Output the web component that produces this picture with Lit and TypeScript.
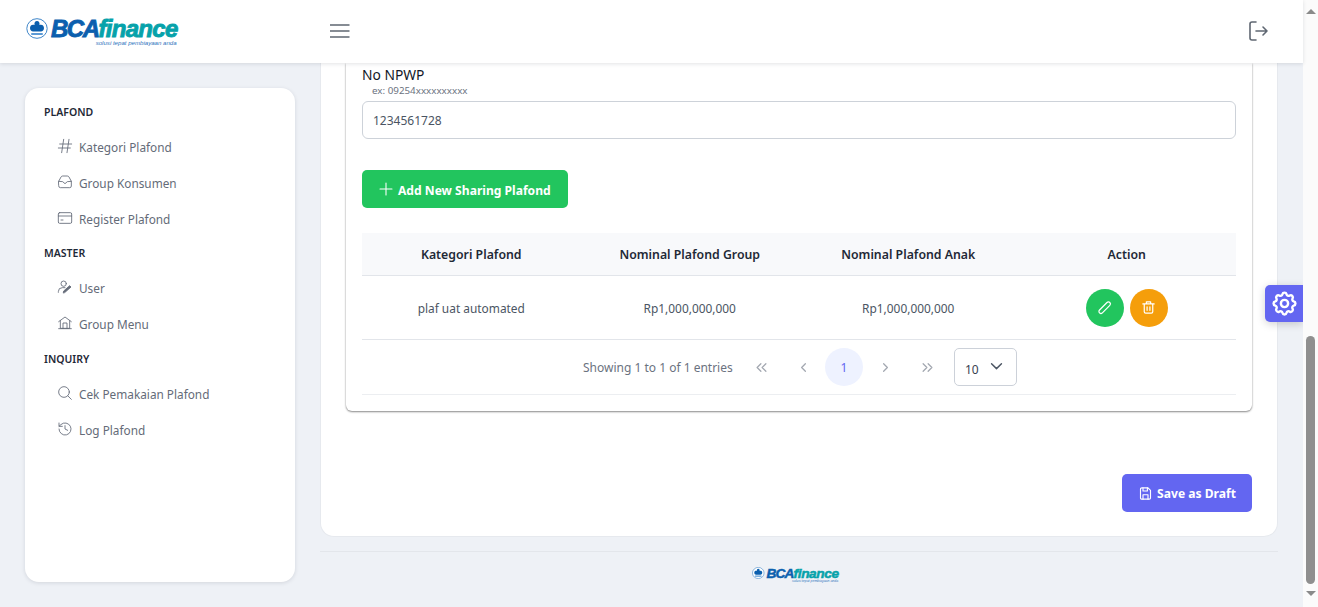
import { LitElement, css, html, svg } from "lit";
import { customElement } from "lit/decorators.js";

const icon = (body: unknown, size = 16, sw = 1.5) => html`<svg
  width=${size}
  height=${size}
  viewBox="0 0 24 24"
  fill="none"
  stroke="currentColor"
  stroke-width=${sw}
  stroke-linecap="round"
  stroke-linejoin="round"
>
  ${body}
</svg>`;

const icons = {
  hash: svg`<path d="M4 9h18M2 15h18M10 2 7 22M18 2l-3 20" />`,
  inbox: svg`<path d="M2.500 11 6 4.500A3 3 0 0 1 8.500 3h7A3 3 0 0 1 18 4.500L21.500 11v7a2.500 2.500 0 0 1-2.500 2.500H5A2.500 2.500 0 0 1 2.500 18z" /><path d="M2.500 11l6 .5 3.500 3 3.500-3 6-.5" />`,
  card: svg`<rect x="2" y="4" width="20" height="16" rx="2" /><path d="M2 9h20M6 15h3" />`,
  user: svg`<circle cx="10" cy="7" r="4" /><path d="M2 20v-1a6 6 0 0 1 6-6h4" /><path d="m12 20 9-8-2-2-9 8-.5 2.500z" fill="currentColor" />`,
  home: svg`<path d="M2.500 10 12 3l9.500 7" /><path d="M5 8.500V20h14V8.500" /><path d="M2.500 20.500h19M9 20v-8h6v8" />`,
  search: svg`<circle cx="10.500" cy="10.500" r="8" /><path d="m21.500 21.500-5.200-5.200" />`,
  history: svg`<path d="M3 12a9 9 0 1 0 3-6.700L3 8" /><path d="M3 3v5h5M12 7v5l4 2" />`,
  plus: svg`<path d="M12 3v18M3 12h18" />`,
  pencil: svg`<path d="M5 15.500 15.500 5a2.800 2.800 0 0 1 4 4L9 19.500a2.800 2.800 0 0 1-4-4z" />`,
  trash: svg`<path d="M4 7h16M9 7V4h6v3M6 7v11a2 2 0 0 0 2 2h8a2 2 0 0 0 2-2V7M10 11v5M14 11v5" />`,
  save: svg`<path d="M6 3h10l4 4v12a2 2 0 0 1-2 2H6a2 2 0 0 1-2-2V5a2 2 0 0 1 2-2z" /><path d="M8 3v5h7V3M8 21v-7h8v7" />`,
  logout: svg`<path d="M10 3H6a2 2 0 0 0-2 2v14a2 2 0 0 0 2 2h4" /><path d="M10 12h11M17 8l4 4-4 4" />`,
  gear: svg`<path d="M10.300 4.300c.4-1.700 3-1.700 3.400 0a1.700 1.700 0 0 0 2.600 1.100c1.500-.9 3.300.8 2.400 2.400a1.700 1.700 0 0 0 1 2.500c1.800.4 1.800 3 0 3.400a1.700 1.700 0 0 0-1 2.600c.9 1.500-.9 3.300-2.400 2.400a1.700 1.700 0 0 0-2.600 1c-.4 1.800-3 1.800-3.400 0a1.700 1.700 0 0 0-2.600-1c-1.500.9-3.300-.9-2.400-2.400a1.700 1.700 0 0 0-1-2.600c-1.800-.4-1.800-3 0-3.400a1.700 1.700 0 0 0 1-2.500c-.9-1.600.9-3.300 2.400-2.400 1 .6 2.300.1 2.600-1.100z" /><circle cx="12" cy="12" r="3" />`,
  first: svg`<path d="m11 6-6 6 6 6M19 6l-6 6 6 6" />`,
  prev: svg`<path d="m15 6-6 6 6 6" />`,
  next: svg`<path d="m9 6 6 6-6 6" />`,
  last: svg`<path d="m5 6 6 6-6 6M13 6l6 6-6 6" />`,
  chevron: svg`<path d="m5 8 7 7 7-7" />`,
};

const menu = [
  {
    title: "PLAFOND",
    items: [
      ["Kategori Plafond", icons.hash],
      ["Group Konsumen", icons.inbox],
      ["Register Plafond", icons.card],
    ],
  },
  {
    title: "MASTER",
    items: [
      ["User", icons.user],
      ["Group Menu", icons.home],
    ],
  },
  {
    title: "INQUIRY",
    items: [
      ["Cek Pemakaian Plafond", icons.search],
      ["Log Plafond", icons.history],
    ],
  },
];

@customElement("brand-logo")
class BrandLogo extends LitElement {
  static styles = css`
    :host {
      display: inline-flex;
      gap: 3px;
      align-items: flex-start;
      font-family: "Liberation Sans", sans-serif;
    }

    .text {
      display: flex;
      flex-direction: column;
      margin-top: 1px;
    }

    .name {
      font-size: 24px;
      line-height: 20px;
      font-weight: 700;
      font-style: italic;
      letter-spacing: -1.500px;
      white-space: nowrap;
      -webkit-text-stroke: 0.9px currentColor;
    }

    .bca {
      color: #0b5fae;
    }

    .finance {
      color: #06a2aa;
      letter-spacing: -0.700px;
    }

    .tag {
      font-size: 6.100px;
      line-height: 7px;
      font-style: italic;
      color: #2f74bd;
      text-align: right;
      padding-right: 1px;
      white-space: nowrap;
    }
  `;

  render() {
    return html`
      <svg width="22" height="21" viewBox="0 0 22 21">
        <ellipse cx="11" cy="10.500" rx="10.200" ry="9.800" fill="#fff" stroke="#3f86c9" stroke-width="1" />
        <path
          d="M11 3c2 0 3 2 2.400 4 2-1 4.600 0 4.600 3 0 2-1.500 3.500-3 3.500H7c-1.500 0-3-1.500-3-3.500 0-3 2.600-4 4.600-3C8 5 9 3 11 3z"
          fill="#0b5fae"
        />
        <rect x="5" y="15" width="12" height="2" rx="1" fill="#5b9ad6" />
      </svg>
      <div class="text">
        <div class="name"><span class="bca">BCA</span><span class="finance">finance</span></div>
        <div class="tag">solusi tepat pembiayaan anda</div>
      </div>
    `;
  }
}

@customElement("side-menu")
class SideMenu extends LitElement {
  static styles = css`
    :host {
      display: block;
      width: 270px;
      height: 494px;
      box-sizing: border-box;
      padding: 15px 0 0 19px;
      background: #fff;
      border-radius: 14px;
      box-shadow: 0 1px 4px rgb(15 23 42 / 12%);
    }

    .title {
      height: 18px;
      line-height: 18px;
      font-size: 10.500px;
      font-weight: 600;
      color: #1f2937;
      margin-bottom: 8px;
    }

    .group + .group .title {
      margin-top: 7px;
    }

    .group:last-child .title {
      margin-top: 8px;
    }

    .item {
      display: flex;
      align-items: center;
      gap: 6px;
      height: 36px;
      padding-left: 13px;
      font-size: 11.800px;
      color: #646b78;
    }

    .item svg {
      margin-top: -3px;
      flex: none;
    }
  `;

  render() {
    return menu.map(
      (group) => html`
        <div class="group">
          <div class="title">${group.title}</div>
          ${group.items.map(
            ([label, glyph]) => html`<div class="item">${icon(glyph, 16, 1.3)}<span>${label}</span></div>`,
          )}
        </div>
      `,
    );
  }
}

@customElement("plafond-table")
class PlafondTable extends LitElement {
  static styles = css`
    :host {
      display: block;
      font-size: 12px;
    }

    .row {
      display: grid;
      grid-template-columns: repeat(4, 1fr);
      align-items: center;
      text-align: center;
      color: #4b5563;
      border-bottom: 1px solid #e2e5ea;
    }

    .head {
      height: 41px;
      padding-top: 1px;
      background: #f8f9fb;
      font-size: 12.300px;
      font-weight: 600;
      color: #1f2937;
    }

    .body {
      height: 63px;
      font-size: 11.900px;
    }

    .cell {
      padding-top: 1px;
    }

    .actions {
      display: flex;
      justify-content: center;
      gap: 6px;
    }

    .round {
      width: 38px;
      height: 38px;
      border-radius: 50%;
      display: grid;
      place-items: center;
      color: #fff;
    }

    .green {
      background: #22c55e;
    }

    .orange {
      background: #f59e0b;
    }

    .pager {
      height: 54px;
      display: flex;
      align-items: center;
      border-bottom: 1px solid #eceef1;
      padding-left: 221px;
      color: #6b7280;
    }

    .count {
      width: 150px;
      white-space: nowrap;
    }

    .page-btn {
      width: 42px;
      display: grid;
      place-items: center;
      color: #a3a8b1;
    }

    .page-btn.first {
      margin-left: 7px;
    }

    .current {
      width: 38px;
      height: 38px;
      border-radius: 50%;
      background: #eef2ff;
      color: #6366f1;
      display: grid;
      place-items: center;
      margin: 0 1px;
    }

    .size {
      width: 63px;
      height: 38px;
      box-sizing: border-box;
      margin-left: 6px;
      border: 1px solid #ccd1d9;
      border-radius: 5px;
      display: flex;
      align-items: center;
      justify-content: space-between;
      padding: 0 11px 0 10px;
      color: #374151;
    }

    .size span {
      margin-top: 4px;
    }

    .size svg {
      color: #4b5563;
      margin-top: -1px;
    }
  `;

  render() {
    return html`
      <div class="row head">
        <div>Kategori Plafond</div>
        <div>Nominal Plafond Group</div>
        <div>Nominal Plafond Anak</div>
        <div>Action</div>
      </div>
      <div class="row body">
        <div class="cell">plaf uat automated</div>
        <div class="cell">Rp1,000,000,000</div>
        <div class="cell">Rp1,000,000,000</div>
        <div class="actions">
          <div class="round green">${icon(icons.pencil, 17, 1.7)}</div>
          <div class="round orange">${icon(icons.trash, 17, 1.7)}</div>
        </div>
      </div>
      <div class="pager">
        <div class="count">Showing 1 to 1 of 1 entries</div>
        <div class="page-btn first">${icon(icons.first, 15, 2)}</div>
        <div class="page-btn">${icon(icons.prev, 15, 2)}</div>
        <div class="current">1</div>
        <div class="page-btn">${icon(icons.next, 15, 2)}</div>
        <div class="page-btn">${icon(icons.last, 15, 2)}</div>
        <div class="size"><span>10</span>${icon(icons.chevron, 17, 2)}</div>
      </div>
    `;
  }
}

@customElement("app-root")
export class AppRoot extends LitElement {
  static styles = css`
    :host {
      display: flex;
      height: 607px;
      overflow: hidden;
      font-family: "Noto Sans", sans-serif;
      position: relative;
      background: #eef1f6;
    }

    .page {
      flex: 1;
      min-width: 0;
      display: flex;
      flex-direction: column;
    }

    header {
      height: 63px;
      box-sizing: border-box;
      flex: none;
      background: #fff;
      box-shadow: 0 1px 4px rgb(15 23 42 / 12%);
      display: flex;
      align-items: center;
      padding: 0 33px 2px 26px;
      position: relative;
      z-index: 1;
    }

    header brand-logo {
      margin-top: 2px;
    }

    .burger {
      margin-left: 152px;
      color: #5f6772;
      display: flex;
    }

    .logout {
      margin-left: auto;
      color: #5f6772;
      display: flex;
    }

    .content {
      flex: 1;
      display: flex;
      padding-left: 25px;
      min-height: 0;
    }

    .left {
      padding-top: 25px;
    }

    .right {
      margin-left: 25px;
      width: 958px;
      display: flex;
      flex-direction: column;
    }

    .panel {
      height: 474px;
      box-sizing: border-box;
      background: #fff;
      border: 1px solid #e6e9ee;
      border-top: none;
      border-radius: 0 0 14px 14px;
      padding: 0 25px;
    }

    .inner {
      height: 348px;
      box-sizing: border-box;
      padding: 0 16px;
      border-radius: 0 0 6px 6px;
      box-shadow: 0 1px 2px rgb(0 0 0 / 45%), 0 0 2px rgb(0 0 0 / 10%);
    }

    label {
      display: block;
      padding-top: 3px;
      height: 18px;
      font-size: 13.800px;
      line-height: 18px;
      color: #111827;
    }

    .hint {
      height: 17px;
      padding-left: 10px;
      font-size: 9.800px;
      line-height: 13px;
      color: #6b7280;
    }

    .input {
      height: 38px;
      box-sizing: border-box;
      border: 1px solid #cdd2d9;
      border-radius: 6px;
      padding: 0 10px;
      display: flex;
      align-items: center;
      font-size: 12px;
      color: #4b5563;
    }

    .btn {
      height: 38px;
      box-sizing: border-box;
      border-radius: 5px;
      display: inline-flex;
      align-items: center;
      color: #fff;
      font-size: 12.100px;
      font-weight: 700;
    }

    .btn span {
      padding-top: 1px;
    }

    .add {
      margin: 31px 0 25px;
      width: 206px;
      padding-left: 16px;
      gap: 4px;
      background: #22c55e;
    }

    .add span {
      padding-top: 2px;
    }

    .draft-row {
      display: flex;
      justify-content: flex-end;
      margin-top: 63px;
    }

    .draft {
      width: 130px;
      gap: 4px;
      justify-content: center;
      background: #6366f1;
    }

    footer {
      margin-top: 14px;
      border-top: 1px solid #e3e6eb;
      display: flex;
      justify-content: center;
      padding: 15px 7px 0 0;
    }

    .mini {
      zoom: 0.57;
    }

    .gear {
      position: absolute;
      left: 1265px;
      top: 285px;
      width: 38px;
      height: 37px;
      border-radius: 5px 0 0 5px;
      background: #6366f1;
      color: #fff;
      display: grid;
      place-items: center;
      box-shadow: 0 2px 8px rgb(0 0 0 / 18%);
    }

    .scrollbar {
      width: 15px;
      flex: none;
      background: #fbfbfb;
      display: flex;
      flex-direction: column;
      align-items: center;
      position: relative;
    }

    .arrow {
      width: 0;
      height: 0;
      border-left: 5px solid transparent;
      border-right: 5px solid transparent;
    }

    .arrow.up {
      margin-top: 9px;
      border-bottom: 5px solid #8a8a8a;
    }

    .arrow.down {
      margin-top: 7px;
      border-top: 5px solid #8a8a8a;
    }

    .thumb {
      margin-top: 322px;
      width: 9px;
      height: 248px;
      border-radius: 5px;
      background: #8f8f8f;
    }
  `;

  render() {
    return html`
      <div class="page">
        <header>
          <brand-logo></brand-logo>
          <span class="burger">
            <svg width="20" height="14" viewBox="0 0 20 14" fill="none" stroke="currentColor" stroke-width="1.6">
              <path d="M0 1h19.500M0 7h19.500M0 13h19.500" />
            </svg>
          </span>
          <span class="logout">${icon(icons.logout, 24, 1.6)}</span>
        </header>
        <div class="content">
          <div class="left"><side-menu></side-menu></div>
          <div class="right">
            <div class="panel">
              <div class="inner">
                <label>No NPWP</label>
                <div class="hint">ex: 09254xxxxxxxxxx</div>
                <div class="input">1234561728</div>
                <div class="btn add">${icon(icons.plus, 16, 1.6)}<span>Add New Sharing Plafond</span></div>
                <plafond-table></plafond-table>
              </div>
              <div class="draft-row">
                <div class="btn draft">${icon(icons.save, 15, 1.8)}<span>Save as Draft</span></div>
              </div>
            </div>
            <footer><brand-logo class="mini"></brand-logo></footer>
          </div>
        </div>
      </div>
      <div class="gear">${icon(icons.gear, 29, 2)}</div>
      <div class="scrollbar">
        <div class="arrow up"></div>
        <div class="thumb"></div>
        <div class="arrow down"></div>
      </div>
    `;
  }
}
